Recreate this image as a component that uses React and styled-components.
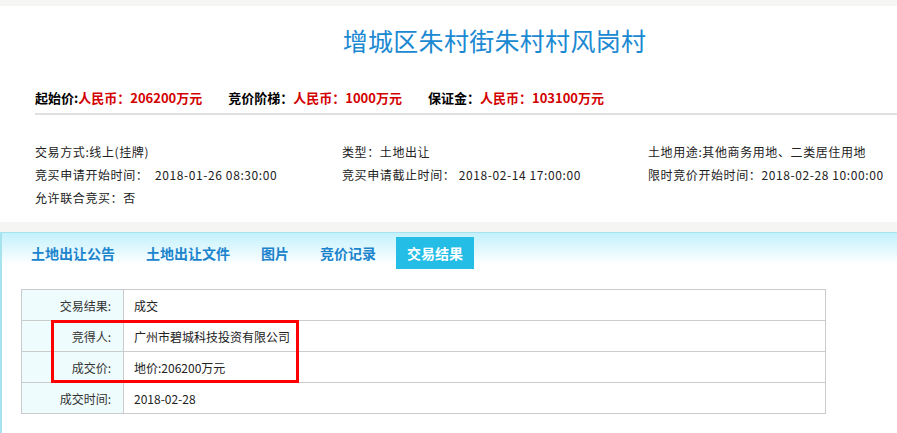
import React from 'react';
import styled, { createGlobalStyle } from 'styled-components';

const GlobalStyle = createGlobalStyle`
  body {
    margin: 0;
    background: #fff;
    font-family: "Noto Sans CJK SC", "Liberation Sans", sans-serif;
    font-size: 12px;
    color: #333;
  }
`;

const Band = styled.div`
  height: ${p => p.h}px;
  background: #f5f6f4;
`;

const Header = styled.header`
  background: #fff;
  padding: 0 0 13px;
`;

const Title = styled.h1`
  margin: 0;
  padding: 22px 0 0 92px;
  text-align: center;
  font-size: 25px;
  line-height: 24px;
  font-weight: 400;
  color: #1b89d2;
  letter-spacing: 0.3px;
`;

const PriceRow = styled.div`
  display: flex;
  gap: 26px;
  margin: 36px 0 0 35px;
  padding-bottom: 5px;
  border-bottom: 2px solid #e0e0e0;
  font-size: 13px;
  font-weight: 700;
  line-height: 20px;
  color: #000;
`;

const Red = styled.span`
  color: #d30000;
`;

const InfoGrid = styled.div`
  display: grid;
  grid-template-columns: 307px 306px 1fr;
  padding-left: 35px;
  margin-top: 25px;
  line-height: 23px;
  letter-spacing: 0.6px;
  color: #222;
  white-space: pre;
`;

const Panel = styled.section`
  border-top: 1px solid #a6e3ee;
  border-left: 2px solid #a6e3ee;
  background: linear-gradient(#c3f1fc 0px, #ffffff 32px);
  padding: 4px 0 20px 18px;
  min-height: 180px;
`;

const Tabs = styled.nav`
  display: flex;
  gap: 9px;
`;

const Tab = styled.div`
  height: 32px;
  line-height: 32px;
  padding: 0 11px;
  font-size: 14px;
  font-weight: 700;
  color: ${p => (p.active ? '#fff' : '#1c84cd')};
  background: ${p => (p.active ? '#24bde5' : 'transparent')};
`;

const TableWrap = styled.div`
  position: relative;
  width: 805px;
  margin: 20px 0 0 1px;
`;

const Table = styled.table`
  width: 100%;
  border-collapse: collapse;
  border: 1px solid #cbcbcb;
`;

const Label = styled.td`
  width: 89px;
  height: 30px;
  padding: 0 12px 0 0;
  text-align: right;
  background: #effcfd;
  border: 1px solid #cbcbcb;
  color: #333;
`;

const Value = styled.td`
  padding: 0 0 0 10px;
  border: 1px solid #cbcbcb;
  color: #222;
`;

const Highlight = styled.div`
  position: absolute;
  left: 30px;
  top: 31px;
  width: 242px;
  height: 57px;
  border: 3px solid #f00;
  pointer-events: none;
`;

const info = [
  '交易方式:线上(挂牌)',
  '类型：土地出让',
  '土地用途:其他商务用地、二类居住用地',
  '竞买申请开始时间：  2018-01-26 08:30:00',
  '竞买申请截止时间： 2018-02-14 17:00:00',
  '限时竞价开始时间：2018-02-28 10:00:00',
  '允许联合竞买：否',
];

const tabs = ['土地出让公告', '土地出让文件', '图片', '竞价记录', '交易结果'];

const results = [
  ['交易结果:', '成交'],
  ['竞得人:', '广州市碧城科技投资有限公司'],
  ['成交价:', '地价:206200万元'],
  ['成交时间:', '2018-02-28'],
];

export default function App() {
  return (
    <>
      <GlobalStyle />
      <Band h={6} />
      <Header>
        <Title>增城区朱村街朱村村风岗村</Title>
        <PriceRow>
          <span>起始价:<Red>人民币：206200万元</Red></span>
          <span>竞价阶梯：<Red>人民币：1000万元</Red></span>
          <span>保证金：<Red>人民币：103100万元</Red></span>
        </PriceRow>
        <InfoGrid>
          {info.map(t => (
            <div key={t}>{t}</div>
          ))}
        </InfoGrid>
      </Header>
      <Band h={10} />
      <Panel>
        <Tabs>
          {tabs.map((t, i) => (
            <Tab key={t} active={i === tabs.length - 1}>{t}</Tab>
          ))}
        </Tabs>
        <TableWrap>
          <Table>
            <tbody>
              {results.map(([k, v]) => (
                <tr key={k}>
                  <Label>{k}</Label>
                  <Value>{v}</Value>
                </tr>
              ))}
            </tbody>
          </Table>
          <Highlight />
        </TableWrap>
      </Panel>
    </>
  );
}
